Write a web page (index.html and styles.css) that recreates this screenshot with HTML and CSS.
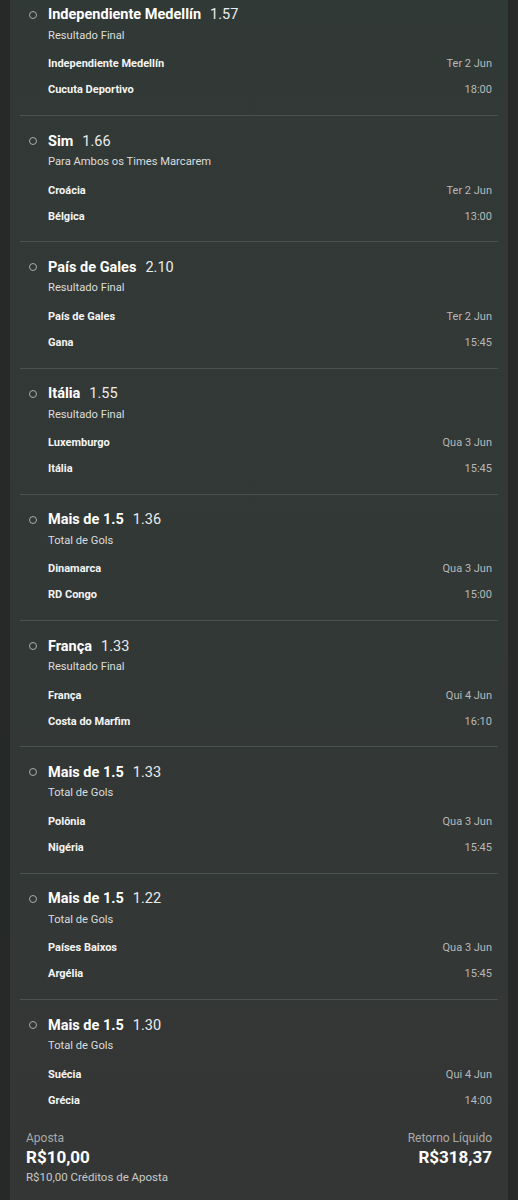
FILE: index.html
```html
<!DOCTYPE html>
<html lang="pt-BR">
<head>
  <meta charset="UTF-8">
  <title>Cupom de Apostas</title>
  <link rel="stylesheet" href="styles.css">
</head>
<body>

  <div class="panel">
    <div class="bets">

      <!-- seleção 1 -->
      <div class="bet">
        <div class="bet-head">
          <span class="dot"></span>
          <span class="pick">Independiente Medellín</span>
          <span class="odds">1.57</span>
        </div>
        <div class="bet-body">
          <div class="market">Resultado Final</div>
          <div class="match">
            <span class="team">Independiente Medellín</span>
            <span class="when">Ter 2 Jun</span>
            <span class="team">Cucuta Deportivo</span>
            <span class="when">18:00</span>
          </div>
        </div>
      </div>

      <div class="bet">
        <div class="bet-head">
          <span class="dot"></span>
          <span class="pick">Sim</span>
          <span class="odds">1.66</span>
        </div>
        <div class="bet-body">
          <div class="market">Para Ambos os Times Marcarem</div>
          <div class="match">
            <span class="team">Croácia</span>
            <span class="when">Ter 2 Jun</span>
            <span class="team">Bélgica</span>
            <span class="when">13:00</span>
          </div>
        </div>
      </div>

      <div class="bet">
        <div class="bet-head">
          <span class="dot"></span>
          <span class="pick">País de Gales</span>
          <span class="odds">2.10</span>
        </div>
        <div class="bet-body">
          <div class="market">Resultado Final</div>
          <div class="match">
            <span class="team">País de Gales</span>
            <span class="when">Ter 2 Jun</span>
            <span class="team">Gana</span>
            <span class="when">15:45</span>
          </div>
        </div>
      </div>

      <div class="bet">
        <div class="bet-head">
          <span class="dot"></span>
          <span class="pick">Itália</span>
          <span class="odds">1.55</span>
        </div>
        <div class="bet-body">
          <div class="market">Resultado Final</div>
          <div class="match">
            <span class="team">Luxemburgo</span>
            <span class="when">Qua 3 Jun</span>
            <span class="team">Itália</span>
            <span class="when">15:45</span>
          </div>
        </div>
      </div>

      <div class="bet">
        <div class="bet-head">
          <span class="dot"></span>
          <span class="pick">Mais de 1.5</span>
          <span class="odds">1.36</span>
        </div>
        <div class="bet-body">
          <div class="market">Total de Gols</div>
          <div class="match">
            <span class="team">Dinamarca</span>
            <span class="when">Qua 3 Jun</span>
            <span class="team">RD Congo</span>
            <span class="when">15:00</span>
          </div>
        </div>
      </div>

      <div class="bet">
        <div class="bet-head">
          <span class="dot"></span>
          <span class="pick">França</span>
          <span class="odds">1.33</span>
        </div>
        <div class="bet-body">
          <div class="market">Resultado Final</div>
          <div class="match">
            <span class="team">França</span>
            <span class="when">Qui 4 Jun</span>
            <span class="team">Costa do Marfim</span>
            <span class="when">16:10</span>
          </div>
        </div>
      </div>

      <div class="bet">
        <div class="bet-head">
          <span class="dot"></span>
          <span class="pick">Mais de 1.5</span>
          <span class="odds">1.33</span>
        </div>
        <div class="bet-body">
          <div class="market">Total de Gols</div>
          <div class="match">
            <span class="team">Polônia</span>
            <span class="when">Qua 3 Jun</span>
            <span class="team">Nigéria</span>
            <span class="when">15:45</span>
          </div>
        </div>
      </div>

      <div class="bet">
        <div class="bet-head">
          <span class="dot"></span>
          <span class="pick">Mais de 1.5</span>
          <span class="odds">1.22</span>
        </div>
        <div class="bet-body">
          <div class="market">Total de Gols</div>
          <div class="match">
            <span class="team">Países Baixos</span>
            <span class="when">Qua 3 Jun</span>
            <span class="team">Argélia</span>
            <span class="when">15:45</span>
          </div>
        </div>
      </div>

      <div class="bet">
        <div class="bet-head">
          <span class="dot"></span>
          <span class="pick">Mais de 1.5</span>
          <span class="odds">1.30</span>
        </div>
        <div class="bet-body">
          <div class="market">Total de Gols</div>
          <div class="match">
            <span class="team">Suécia</span>
            <span class="when">Qui 4 Jun</span>
            <span class="team">Grécia</span>
            <span class="when">14:00</span>
          </div>
        </div>
      </div>

    </div>

    <!-- resumo da aposta -->
    <div class="summary">
      <div class="stake">
        <div class="label">Aposta</div>
        <div class="amount">R$10,00</div>
        <div class="credits">R$10,00 Créditos de Aposta</div>
      </div>
      <div class="return">
        <div class="label">Retorno Líquido</div>
        <div class="amount">R$318,37</div>
      </div>
    </div>
  </div>

</body>
</html>
```

FILE: styles.css
```css
body {
  margin: 0;
  font-family: Roboto, "Liberation Sans", sans-serif;
  background: #262928;
  overflow: hidden;
}

.panel {
  margin: 0 10px;
  height: 1200px;
  padding: 0 10px;
  box-sizing: border-box;
  background: linear-gradient(180deg, #313936 0%, #323836 50%, #343635 100%);
  overflow: hidden;
}

.bets {
  margin-top: -10.3px;
}

/* Cada seleção */
.bet {
  padding: 15px 6px 12.3px 0;
  border-bottom: 1px solid #4a524f;
}

.bet:last-child {
  border-bottom: none;
  padding-bottom: 12px;
}

.bet-head {
  display: flex;
  align-items: center;
  height: 20px;
}

.dot {
  width: 6px;
  height: 6px;
  border: 1.3px solid #aaacab;
  border-radius: 50%;
  margin: 0 11px 0 9px;
}

.pick {
  font-size: 14.5px;
  font-weight: 700;
  color: #fff;
}

.odds {
  font-size: 14.5px;
  color: #ececec;
  margin-left: 9px;
}

.bet-body {
  padding-left: 28px;
}

.market {
  margin-top: 3px;
  font-size: 11.2px;
  line-height: 16px;
  color: #dcdcdc;
}

.match {
  margin-top: 7px;
  display: grid;
  grid-template-columns: 1fr auto;
  grid-auto-rows: 26px;
  align-items: center;
}

.team {
  font-size: 11px;
  font-weight: 700;
  color: #f4f4f4;
}

.when {
  font-size: 11px;
  color: #b8b8b8;
  text-align: right;
}

/* Resumo */
.summary {
  display: flex;
  justify-content: space-between;
  padding: 5px 6px 0;
}

.label {
  font-size: 12px;
  line-height: 16px;
  color: #a9a9a9;
}

.amount {
  font-size: 17px;
  font-weight: 700;
  line-height: 22px;
  color: #fff;
}

.credits {
  margin-top: 1px;
  font-size: 11.5px;
  line-height: 16px;
  color: #c9c9c9;
}

.return {
  text-align: right;
}
```
